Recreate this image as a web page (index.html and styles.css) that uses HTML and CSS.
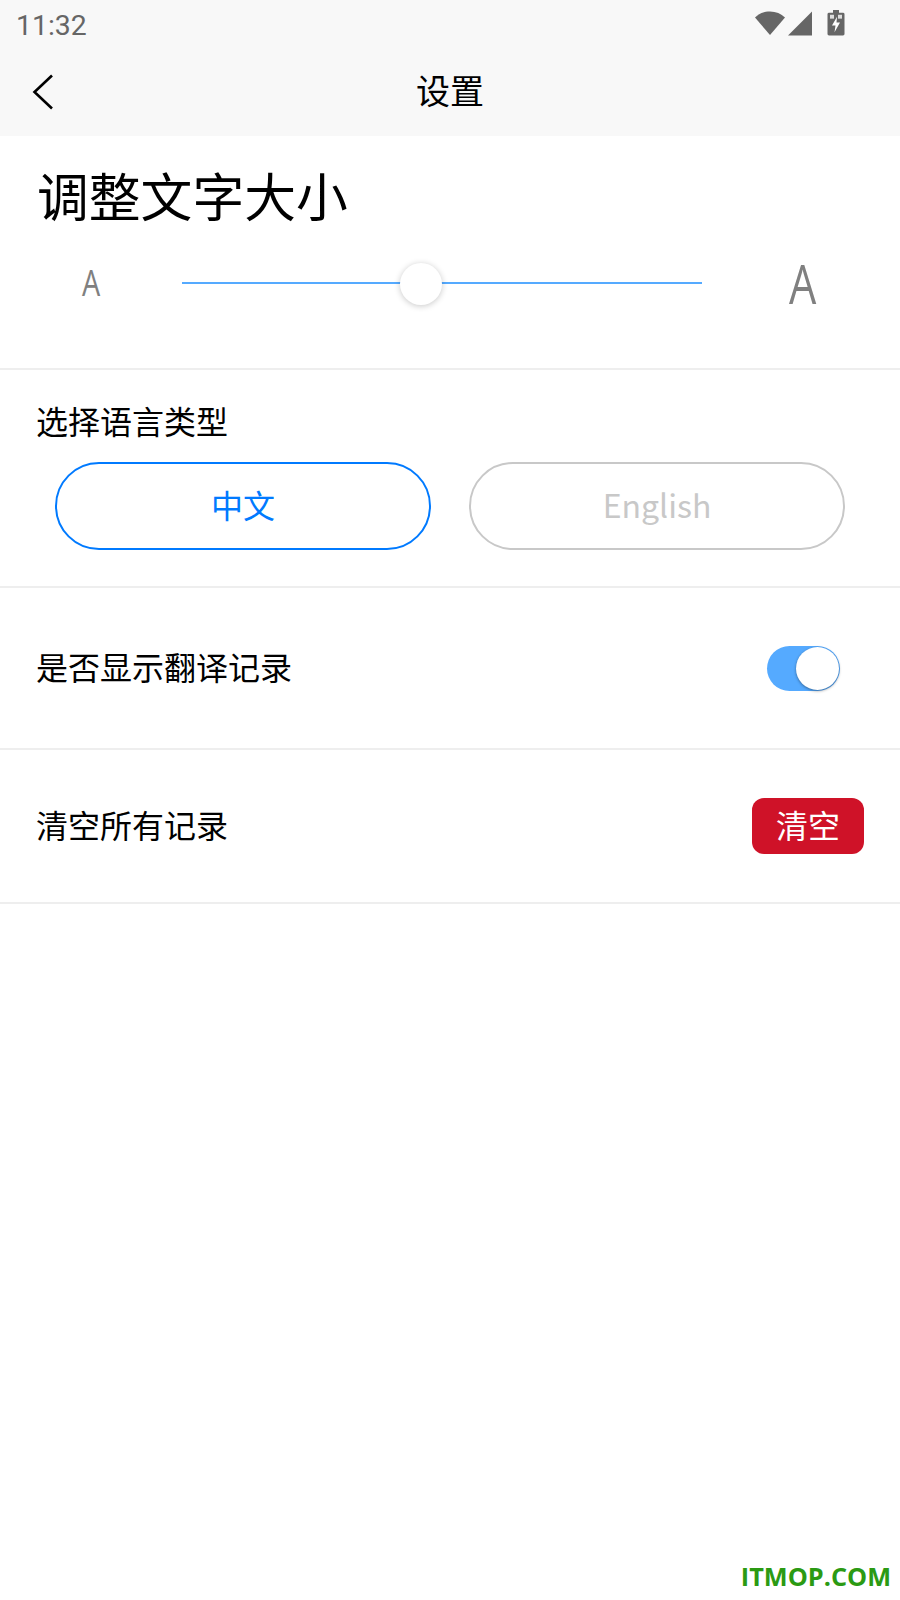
FILE: index.html
```html
<!DOCTYPE html>
<html lang="zh-CN">
<head>
  <meta charset="UTF-8" />
  <meta name="viewport" content="width=device-width, initial-scale=1.0"/>
  <title>设置</title>
  <link rel="stylesheet" href="styles.css">
</head>
<body>

  <!-- Top bars -->
  <div class="topbar">
    <div class="status">
      <span class="time">11:32</span>
      <div class="status-icons">
        <svg class="wifi" width="32" height="26" viewBox="0 0 32 26"><path d="M1 8.500C5 4.500 10 2.500 16 2.500s11 2 15 6L16 26z" fill="#666"/></svg>
        <svg class="signal" width="26" height="26" viewBox="0 0 26 26"><path d="M25 1.500V25.500H1z" fill="#666"/></svg>
        <svg class="battery" width="18" height="27" viewBox="0 0 18 28" preserveAspectRatio="none"><path d="M6 1h6v3h4a1.500 1.500 0 0 1 1.500 1.500v20.500a1.500 1.500 0 0 1-1.500 1.500H2a1.500 1.500 0 0 1-1.500-1.500V5.500A1.500 1.500 0 0 1 2 4h4z" fill="#666"/><path d="M10 8 5 17h3.500L7.500 24l5.500-10H9.500z" fill="#fff"/><rect x="3" y="6" width="4" height="4" fill="#ddd"/><rect x="11" y="6" width="4" height="4" fill="#ddd"/></svg>
      </div>
    </div>
    <div class="nav">
      <svg class="back" width="22" height="36" viewBox="0 0 22 36"><path d="M20 1.500 2.500 18 20 34.500" fill="none" stroke="#000" stroke-width="2.600"/></svg>
      <h1>设置</h1>
    </div>
  </div>

  <!-- Text size -->
  <div class="section size-section">
    <h2>调整文字大小</h2>
    <div class="size-row">
      <span class="size-a small">A</span>
      <div class="slider"><span class="knob"></span></div>
      <span class="size-a big">A</span>
    </div>
  </div>

  <!-- Language -->
  <div class="section lang-section">
    <div class="label">选择语言类型</div>
    <div class="lang-btns">
      <div class="lang-btn active">中文</div>
      <div class="lang-btn">English</div>
    </div>
  </div>

  <div class="section row history-row">
    <div class="label">是否显示翻译记录</div>
    <div class="switch"><span class="switch-knob"></span></div>
  </div>

  <div class="section row clear-row">
    <div class="label">清空所有记录</div>
    <div class="clear-btn">清空</div>
  </div>

  <div class="watermark">ITMOP.COM</div>

</body>
</html>
```

FILE: styles.css
```css
* {
  box-sizing: border-box;
  margin: 0;
  padding: 0;
}

body, html {
  height: 100%;
  font-family: "Noto Sans CJK SC", "Noto Sans", sans-serif;
  background: #fff;
  color: #000;
}

body {
  position: relative;
  overflow: hidden;
}

.topbar {
  height: 136px;
  background-color: #f8f8f8;
}

.status {
  height: 50px;
  display: flex;
  justify-content: space-between;
  align-items: center;
  padding: 0 55px 0 16px;
}

.time {
  font-family: Roboto, sans-serif;
  font-size: 28.400px;
  color: #666;
}

.status-icons {
  display: flex;
  align-items: flex-start;
  gap: 1px;
  height: 28px;
  margin-top: -4px;
}

.signal {
  margin-top: 1px;
}

.battery {
  margin-left: 13px;
}

.nav {
  height: 86px;
  position: relative;
  display: flex;
  justify-content: center;
  align-items: center;
}

.nav h1 {
  font-size: 34px;
  font-weight: 400;
  line-height: 1;
  margin-top: -6px;
}

.back {
  position: absolute;
  left: 32px;
  top: 24px;
}

.section {
  border-bottom: 2px solid #eee;
}

.size-section {
  height: 234px;
  padding-top: 25px;
}

.size-section h2 {
  font-size: 51.800px;
  font-weight: 400;
  line-height: 68px;
  padding-left: 37px;
}

.size-row {
  display: flex;
  align-items: center;
  height: 84px;
  margin-top: 12px;
}

.size-a {
  font-family: "Open Sans", sans-serif;
  font-weight: 400;
  color: #808080;
  line-height: 1;
  text-align: center;
  transform: scaleX(0.8);
}

.size-a.small {
  width: 182px;
  font-size: 36px;
}

.size-a.big {
  width: 198px;
  padding-left: 4px;
  font-size: 54px;
}

.slider {
  flex: 1;
  height: 2px;
  background-color: #55aaff;
  position: relative;
}

.knob {
  position: absolute;
  left: 218px;
  top: -19px;
  width: 42px;
  height: 42px;
  border-radius: 50%;
  background: #fff;
  box-shadow: 0 1px 6px rgba(0, 0, 0, 0.22);
}

.label {
  font-size: 32px;
  line-height: 46px;
  padding-left: 36px;
}

.lang-section {
  height: 218px;
  padding-top: 27px;
}

.lang-btns {
  display: flex;
  gap: 38px;
  padding-left: 55px;
  margin-top: 19px;
}

.lang-btn {
  width: 376px;
  height: 88px;
  border: 2px solid #c8c8c8;
  border-radius: 44px;
  display: flex;
  justify-content: center;
  align-items: center;
  padding-bottom: 4px;
  font-size: 32px;
  color: #c8c8c8;
}

.lang-btn.active {
  border-color: #007aff;
  color: #007aff;
}

.row {
  display: flex;
  justify-content: space-between;
  align-items: center;
}

.row .label {
  margin-bottom: 5px;
}

.history-row {
  height: 162px;
  padding-right: 60px;
}

.clear-row {
  height: 154px;
  padding-right: 36px;
}

.switch {
  width: 73px;
  height: 45px;
  border-radius: 23px;
  background-color: #55aaff;
  position: relative;
}

.switch-knob {
  position: absolute;
  right: 1px;
  top: 1px;
  width: 43px;
  height: 43px;
  border-radius: 50%;
  background: #fff;
  box-shadow: 0 1px 3px rgba(0, 0, 0, 0.4);
}

.clear-btn {
  width: 112px;
  height: 56px;
  border-radius: 12px;
  background-color: #cf1228;
  color: #fff;
  font-size: 32px;
  display: flex;
  justify-content: center;
  align-items: center;
  padding-bottom: 5px;
}

.watermark {
  position: absolute;
  right: 9px;
  bottom: 6px;
  font-family: "Open Sans", sans-serif;
  font-weight: 700;
  font-size: 25.300px;
  line-height: 36px;
  color: #2b9a13;
}
```
